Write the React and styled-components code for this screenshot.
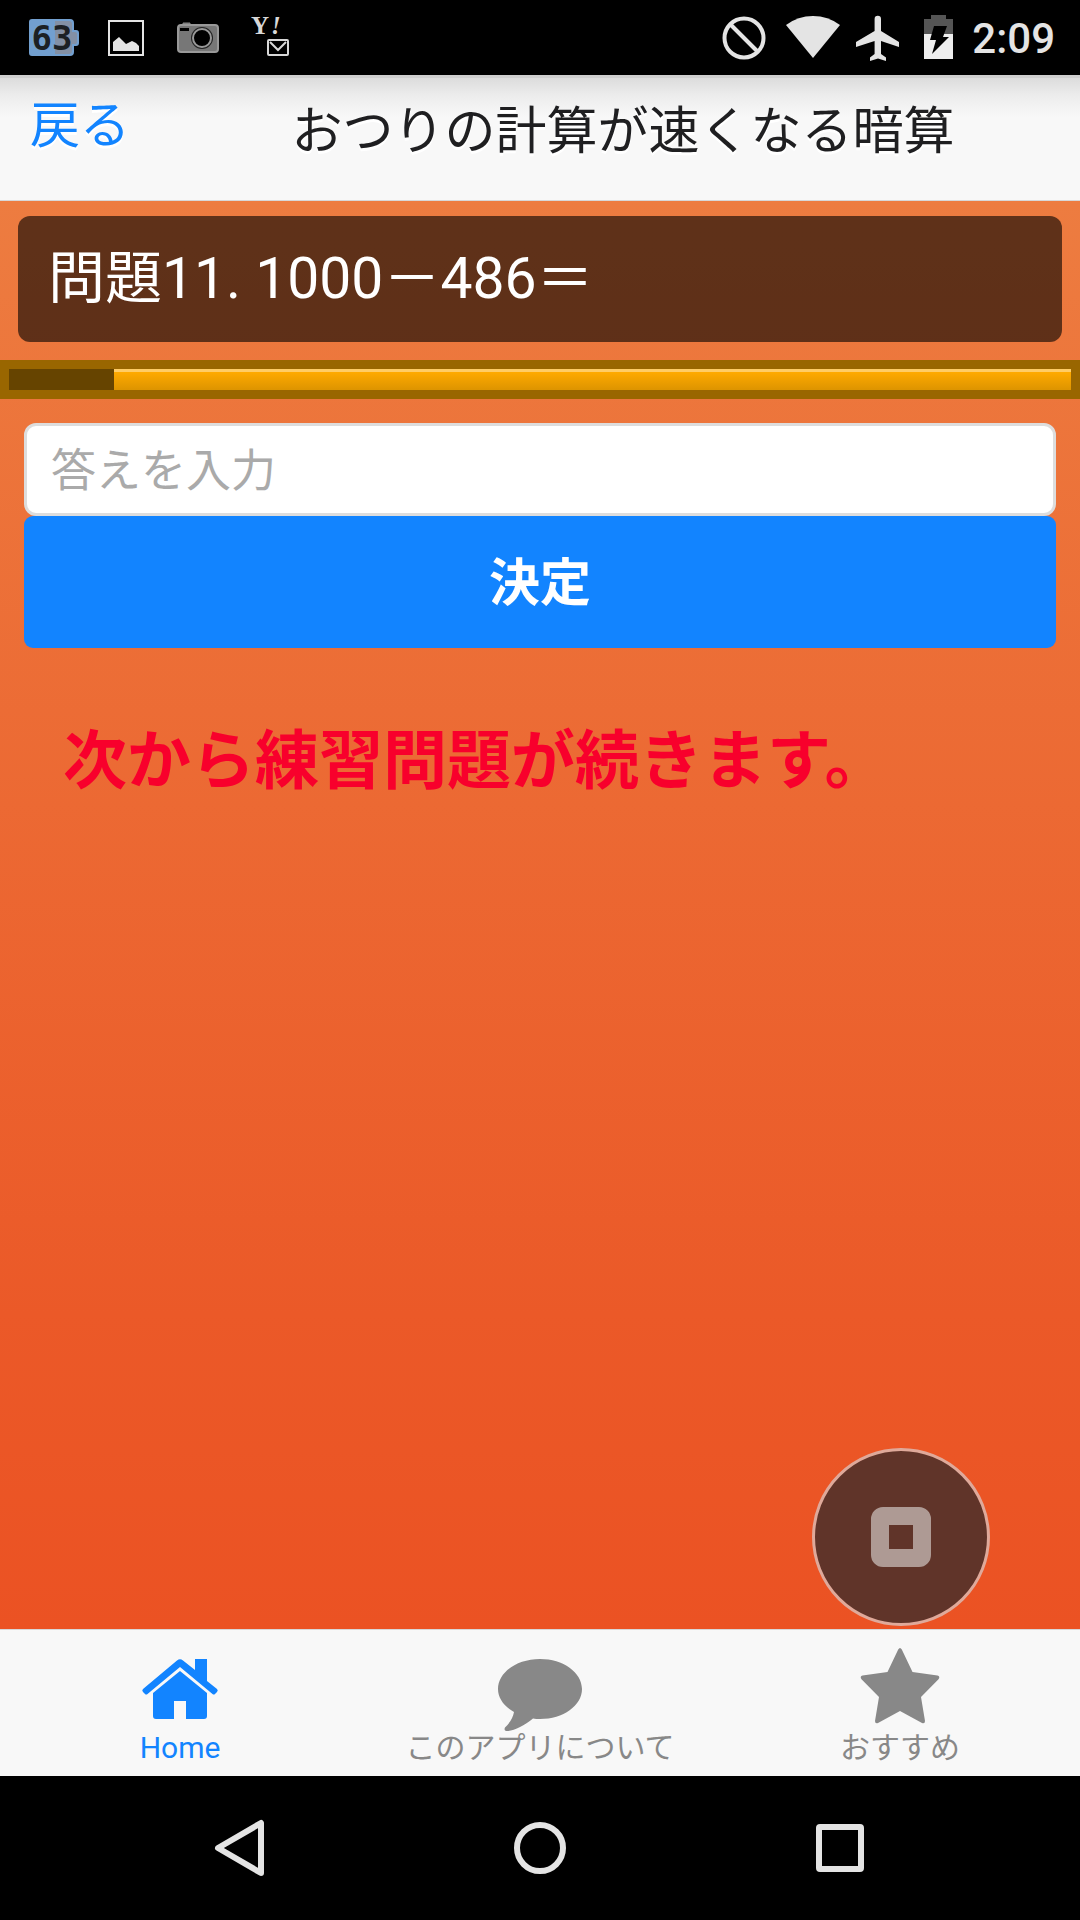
import React, { useState } from 'react'
import styled, { createGlobalStyle } from 'styled-components'

const GlobalStyle = createGlobalStyle`
  * {
    box-sizing: border-box;
  }
  body {
    margin: 0;
    background: #000;
    font-family: Roboto, "Noto Sans CJK JP", sans-serif;
  }
  button, input {
    font-family: inherit;
    margin: 0;
  }
`

const Screen = styled.div`
  display: flex;
  flex-direction: column;
  min-height: 100vh;
`

const StatusBar = styled.div`
  display: flex;
  align-items: center;
  justify-content: space-between;
  height: 75px;
  padding: 0 25px 0 28px;
  background: #000;
  color: #e4e4e4;
`

const StatusGroup = styled.div`
  display: flex;
  align-items: center;
  gap: ${props => props.$gap}px;
  svg {
    display: block;
  }
`

const Clock = styled.time`
  padding-top: 3px;
  font-size: 42px;
  line-height: 48px;
  font-weight: 500;
`

const Header = styled.header`
  display: flex;
  align-items: flex-start;
  height: 126px;
  border-bottom: 1px solid #d8d8d8;
  background: linear-gradient(#cfcfcf 0, #cfcfcf 3px, #dcdcdc 3px, #ececec 20px, #f8f8f8 42px);
`

const BackButton = styled.button`
  width: 166px;
  padding: 21px 0 0 30px;
  border: 0;
  background: none;
  color: #1284ff;
  font-size: 50px;
  line-height: 60px;
  text-align: left;
  text-shadow: 0 3px 0 #fff;
  cursor: pointer;
`

const Title = styled.h1`
  flex: 1;
  margin: 0;
  padding-top: 27px;
  color: #1f1f21;
  font-size: 51px;
  line-height: 60px;
  font-weight: 400;
  text-align: center;
  text-shadow: 0 3px 0 #fff;
`

const Content = styled.main`
  position: relative;
  flex: 1;
  display: flex;
  flex-direction: column;
  padding-top: 15px;
  background: linear-gradient(#ed7c40, #eb5928 78%, #eb5223);
`

const Question = styled.p`
  margin: 0 18px 18px;
  padding: 27px 30px;
  border-radius: 12px;
  background: rgba(0, 0, 0, 0.6);
  color: #fff;
  font-size: 57px;
  line-height: 72px;
`

const Timer = styled.div`
  display: flex;
  justify-content: flex-end;
  height: 39px;
  border: 9px solid #996600;
  background: #664400;
`

const TimerLeft = styled.div`
  border-top: 3px solid #ffcc66;
  background: linear-gradient(#ffaa00, #dd9400);
`

const Form = styled.form`
  display: flex;
  flex-direction: column;
  padding: 24px;
`

const Answer = styled.input`
  height: 93px;
  padding: 3px 24px 0;
  border: 3px solid #ddd;
  border-radius: 12px;
  outline: 0;
  background: #fff;
  color: #1f1f21;
  font-size: 45px;
  &::placeholder {
    color: #aaa;
    opacity: 1;
  }
`

const Submit = styled.button`
  height: 132px;
  padding: 0 0 6px;
  border: 0;
  border-radius: 9px;
  background: #1284ff;
  color: #fff;
  font-size: 51px;
  font-weight: 700;
  cursor: pointer;
`

const Notice = styled.p`
  margin: 51px 63px 0;
  color: #f8002c;
  font-size: 64px;
  line-height: 78px;
  font-weight: 700;
`

const FloatingButton = styled.button`
  position: absolute;
  right: 90px;
  bottom: 3px;
  display: grid;
  place-items: center;
  width: 178px;
  height: 178px;
  padding: 0;
  border: 3px solid #dfa99a;
  border-radius: 50%;
  background: #603429;
  cursor: pointer;
`

const TabBar = styled.nav`
  display: grid;
  grid-template-columns: repeat(3, 1fr);
  height: 147px;
  border-top: 1px solid #d8d8d8;
  background: #f8f8f8;
`

const Tab = styled.a`
  display: flex;
  flex-direction: column;
  align-items: center;
  padding-top: 12px;
  color: ${props => (props.$active ? '#1284ff' : '#888')};
  font-size: 30px;
  line-height: 32px;
  text-decoration: none;
  svg {
    display: block;
  }
`

const SystemNav = styled.div`
  display: flex;
  justify-content: center;
  gap: 204px;
  height: 144px;
  background: #000;
`

const SystemButton = styled.button`
  display: grid;
  place-items: center;
  width: 96px;
  padding: 0;
  border: 0;
  background: none;
  cursor: pointer;
`

const BatteryLevelIcon = () => (
  <svg width="52" height="60" viewBox="0 -11 52 60">
    <path d="M4 0h38a4 4 0 0 1 4 4v7h2a3 3 0 0 1 3 3v10a3 3 0 0 1-3 3h-2v6a4 4 0 0 1-4 4H4a3 3 0 0 1-3-3V3a3 3 0 0 1 3-3z" fill="#729fcf" />
    <path d="M27 2h14a3 3 0 0 1 3 3v8h3a2 2 0 0 1 2 2v8a2 2 0 0 1-2 2h-3v7a3 3 0 0 1-3 3H27z" fill="#8390a5" />
    <text x="24" y="31" textAnchor="middle" fill="#1c2024" fontFamily="DejaVu Sans Mono" fontWeight="700" fontSize="34">63</text>
  </svg>
)

const PictureIcon = () => (
  <svg width="36" height="36" viewBox="0 0 36 36">
    <rect x="1" y="1" width="34" height="34" fill="none" stroke="#e4e4e4" strokeWidth="2" />
    <path d="M5 31V22l6-5 3 3 4 4 6-3 4 2 3 3v5z" fill="#e4e4e4" />
  </svg>
)

const CameraIcon = () => (
  <svg width="47" height="32" viewBox="-5 0 47 32">
    <path d="M6 3V1h7v2" fill="#777" stroke="#888" />
    <rect x="1" y="3" width="40" height="27" rx="3" fill="#777" stroke="#999" strokeWidth="2" />
    <rect x="3" y="6" width="9" height="3" fill="#000" />
    <circle cx="25" cy="16" r="11" fill="#222" />
    <circle cx="25" cy="16" r="9" fill="#000" stroke="#999" strokeWidth="2" />
  </svg>
)

const MailIcon = () => (
  <svg width="44" height="56" viewBox="-4 -8 44 56">
    <text x="0" y="16" fill="#d8d8d8" fontFamily="Liberation Serif" fontWeight="700" fontSize="25">
      Y<tspan fontStyle="italic" dx="2">!</tspan>
    </text>
    <rect x="17" y="22" width="20" height="15" rx="1" fill="none" stroke="#d8d8d8" strokeWidth="2" />
    <path d="M19 24l8 8 8-8" fill="none" stroke="#d8d8d8" strokeWidth="2" />
  </svg>
)

const BlockedIcon = () => (
  <svg width="48" height="44" viewBox="0 0 48 44" fill="none" stroke="#e4e4e4" strokeWidth="4">
    <circle cx="22" cy="22" r="19.500" />
    <path d="M8 8l28 28" />
  </svg>
)

const WifiIcon = () => (
  <svg width="54" height="46" viewBox="0 0 54 46">
    <path d="M0 10Q12 1 27 1t27 9L27 43z" fill="#e4e4e4" />
  </svg>
)

const PlaneIcon = () => (
  <svg width="52" height="46" viewBox="0 0 52 46">
    <path d="M43 32v-5L25 16V4a3.200 3.200 0 0 0-6.400 0v12L0 27v5l18.600-6v13L14 42.500V46l8-2.500 8 2.500v-3.500L25 39V26z" fill="#e4e4e4" />
  </svg>
)

const ChargingIcon = () => (
  <svg width="32" height="46" viewBox="0 0 32 46">
    <path d="M0 4h7V0h15v4h7v15H0z" fill="#555" />
    <path d="M0 19h29v25H0z" fill="#eee" />
    <path d="M10 11h13l-4 11h6L8 39l4-14H6z" fill="#000" />
  </svg>
)

const HomeIcon = () => (
  <svg width="90" height="90" viewBox="0 0 90 90" fill="currentColor">
    <path d="M45 29l27 22v23a3 3 0 0 1-3 3H51V59H39v18H21a3 3 0 0 1-3-3V51z" />
    <path d="M60 28V17h12v22l10 8q1.500 1.300 0 3l-2 2q-1.200 1.200-2.500 0L45 25 12.500 52q-1.300 1.200-2.500 0l-2-2q-1.500-1.700 0-3l34-28.500q3-2.500 6 0z" />
  </svg>
)

const BubbleIcon = () => (
  <svg width="90" height="90" viewBox="0 0 90 90" fill="currentColor">
    <path d="M45 17c23.200 0 42 13.400 42 30S68.200 77 45 77q-4 0-7-.5C29 84 19 89 11.500 89q-3-.5-1.500-3.500 7.500-7 9-15.500C9 64.500 3 56 3 47c0-16.600 18.800-30 42-30z" />
  </svg>
)

const StarIcon = () => (
  <svg width="90" height="90" viewBox="0 0 90 90" fill="currentColor">
    <path d="M43.200 7.500q1.800-3 3.600 0L57.500 30l25 3.500q3 1 1 3.800L66 55l4 24q0 3-3 2L45 69 23 81q-3 1-3-2l4-24L6.500 37.300q-2-2.800 1-3.800L32.500 30z" />
  </svg>
)

const StopIcon = () => (
  <svg width="60" height="60" viewBox="0 0 60 60">
    <path fillRule="evenodd" d="M12 0h36a12 12 0 0 1 12 12v36a12 12 0 0 1-12 12H12A12 12 0 0 1 0 48V12A12 12 0 0 1 12 0zM18 18v24h24V18z" fill="#ae9a94" />
  </svg>
)

const SystemIcon = ({ children }) => (
  <svg width="60" height="60" viewBox="0 0 60 60" fill="none" stroke="#e4e4e4" strokeWidth="6" strokeLinejoin="round">
    {children}
  </svg>
)

const tabs = [
  { label: 'Home', href: '#home', Icon: HomeIcon },
  { label: 'このアプリについて', href: '#about', Icon: BubbleIcon },
  { label: 'おすすめ', href: '#recommend', Icon: StarIcon },
]

const App = () => {
  const [answer, setAnswer] = useState('')
  const [activeTab, setActiveTab] = useState('#home')
  const remaining = 90.1

  return (
    <Screen>
      <GlobalStyle />
      <StatusBar>
        <StatusGroup $gap={28}>
          <BatteryLevelIcon />
          <PictureIcon />
          <CameraIcon />
          <MailIcon />
        </StatusGroup>
        <StatusGroup $gap={16}>
          <BlockedIcon />
          <WifiIcon />
          <PlaneIcon />
          <ChargingIcon />
          <Clock>2:09</Clock>
        </StatusGroup>
      </StatusBar>
      <Header>
        <BackButton type="button">戻る</BackButton>
        <Title>おつりの計算が速くなる暗算</Title>
      </Header>
      <Content>
        <Question>問題11. 1000－486＝</Question>
        <Timer role="progressbar" aria-label="残り時間" aria-valuenow={remaining}>
          <TimerLeft style={{ width: `${remaining}%` }} />
        </Timer>
        <Form onSubmit={e => e.preventDefault()}>
          <Answer
            type="text"
            inputMode="numeric"
            aria-label="答えを入力"
            placeholder="答えを入力"
            value={answer}
            onChange={e => setAnswer(e.target.value)}
          />
          <Submit type="submit">決定</Submit>
        </Form>
        <Notice>次から練習問題が続きます。</Notice>
        <FloatingButton type="button" aria-label="停止">
          <StopIcon />
        </FloatingButton>
      </Content>
      <TabBar>
        {tabs.map(({ label, href, Icon }) => (
          <Tab
            key={href}
            href={href}
            $active={href === activeTab}
            onClick={() => setActiveTab(href)}
          >
            <Icon />
            {label}
          </Tab>
        ))}
      </TabBar>
      <SystemNav>
        <SystemButton type="button" aria-label="戻る">
          <SystemIcon><path d="M51 5v50L8 30z" /></SystemIcon>
        </SystemButton>
        <SystemButton type="button" aria-label="ホーム">
          <SystemIcon><circle cx="30" cy="30" r="23" /></SystemIcon>
        </SystemButton>
        <SystemButton type="button" aria-label="履歴">
          <SystemIcon><rect x="9" y="9" width="42" height="42" rx="1" /></SystemIcon>
        </SystemButton>
      </SystemNav>
    </Screen>
  )
}

export default App
